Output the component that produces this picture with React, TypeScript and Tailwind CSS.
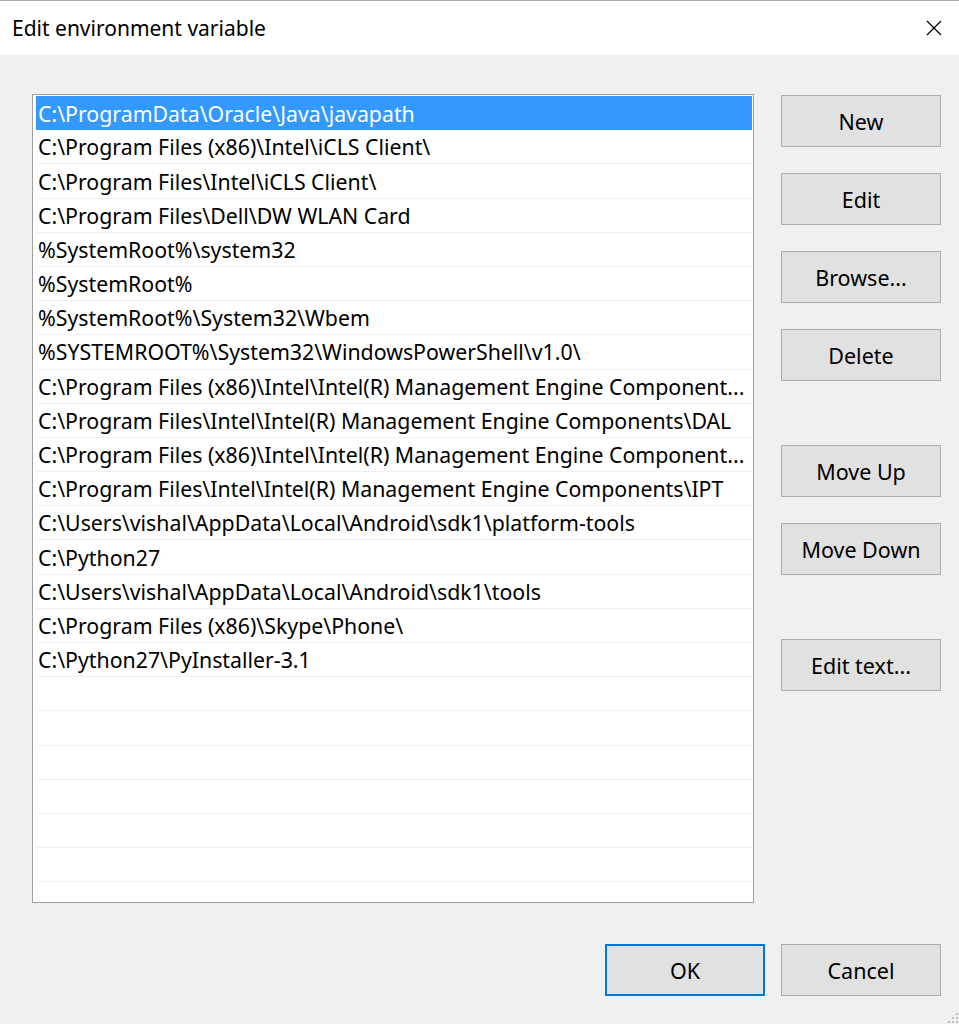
import React from 'react';

const PATHS = [
  'C:\\ProgramData\\Oracle\\Java\\javapath',
  'C:\\Program Files (x86)\\Intel\\iCLS Client\\',
  'C:\\Program Files\\Intel\\iCLS Client\\',
  'C:\\Program Files\\Dell\\DW WLAN Card',
  '%SystemRoot%\\system32',
  '%SystemRoot%',
  '%SystemRoot%\\System32\\Wbem',
  '%SYSTEMROOT%\\System32\\WindowsPowerShell\\v1.0\\',
  'C:\\Program Files (x86)\\Intel\\Intel(R) Management Engine Component...',
  'C:\\Program Files\\Intel\\Intel(R) Management Engine Components\\DAL',
  'C:\\Program Files (x86)\\Intel\\Intel(R) Management Engine Component...',
  'C:\\Program Files\\Intel\\Intel(R) Management Engine Components\\IPT',
  'C:\\Users\\vishal\\AppData\\Local\\Android\\sdk1\\platform-tools',
  'C:\\Python27',
  'C:\\Users\\vishal\\AppData\\Local\\Android\\sdk1\\tools',
  'C:\\Program Files (x86)\\Skype\\Phone\\',
  'C:\\Python27\\PyInstaller-3.1',
];

const rows = [...PATHS, ...Array(8).fill('')];

const font = { fontFamily: '"Noto Sans", "Open Sans", sans-serif' };

const Btn = ({ label, primary }: { label: string; primary?: boolean }) => (
  <button
    className={
      primary
        ? 'w-[160px] h-[52px] bg-[#e1e1e1] border-2 border-[#0078d7] text-[21.5px] text-black pt-[2px]'
        : 'w-[160px] h-[52px] bg-[#e1e1e1] border border-[#adadad] text-[21.5px] text-black pt-[2px]'
    }
  >
    {label}
  </button>
);

export default function App() {
  return (
    <div
      className="w-[959px] h-[1024px] bg-[#f0f0f0] flex flex-col overflow-hidden relative"
      style={font}
    >
      {/* title bar */}
      <div className="h-[55px] bg-white border-t border-[#a6adb5] flex items-center justify-between pl-[12px] pr-[17px] shrink-0">
        <span className="text-[21px] text-black pt-[2px]">Edit environment variable</span>
        <svg width="16" height="16" viewBox="0 0 16 16" className="text-black">
          <path d="M1 1L15 15M15 1L1 15" stroke="currentColor" strokeWidth="1.3" fill="none" />
        </svg>
      </div>

      <div className="flex pl-[32px] pt-[39px] gap-[27px]">
        {/* list */}
        <div className="w-[722px] h-[809px] bg-white border border-[#a0a0a0] pt-[1px] pl-[3px] pr-[1px] overflow-hidden">
          {rows.map((p, i) => (
            <div
              key={i}
              className={
                i === 0
                  ? 'h-[34.2px] bg-[#3399ff] text-white flex items-center pl-[2px] pt-[1px] text-[21.3px] whitespace-nowrap overflow-hidden'
                  : 'h-[34.2px] border-b border-[#f0f0f0] text-black flex items-center pl-[2px] pt-[1px] text-[21.3px] whitespace-nowrap overflow-hidden'
              }
            >
              {p}
            </div>
          ))}
        </div>

        {/* side buttons */}
        <div className="flex flex-col pt-[1px]">
          <div className="flex flex-col gap-[26px]">
            <Btn label="New" />
            <Btn label="Edit" />
            <Btn label="Browse..." />
            <Btn label="Delete" />
          </div>
          <div className="flex flex-col gap-[26px] mt-[64px]">
            <Btn label="Move Up" />
            <Btn label="Move Down" />
          </div>
          <div className="mt-[64px]">
            <Btn label="Edit text..." />
          </div>
        </div>
      </div>

      <div className="flex justify-end gap-[16px] pr-[18px] mt-[41px]">
        <Btn label="OK" primary />
        <Btn label="Cancel" />
      </div>

      {/* resize grip */}
      <svg width="12" height="12" viewBox="0 0 12 12" className="absolute right-0 bottom-0 text-[#bcbcbc]">
        <rect x="9" y="1" width="2" height="2" fill="currentColor" />
        <rect x="5" y="5" width="2" height="2" fill="currentColor" />
        <rect x="9" y="5" width="2" height="2" fill="currentColor" />
        <rect x="1" y="9" width="2" height="2" fill="currentColor" />
        <rect x="5" y="9" width="2" height="2" fill="currentColor" />
        <rect x="9" y="9" width="2" height="2" fill="currentColor" />
      </svg>
    </div>
  );
}
